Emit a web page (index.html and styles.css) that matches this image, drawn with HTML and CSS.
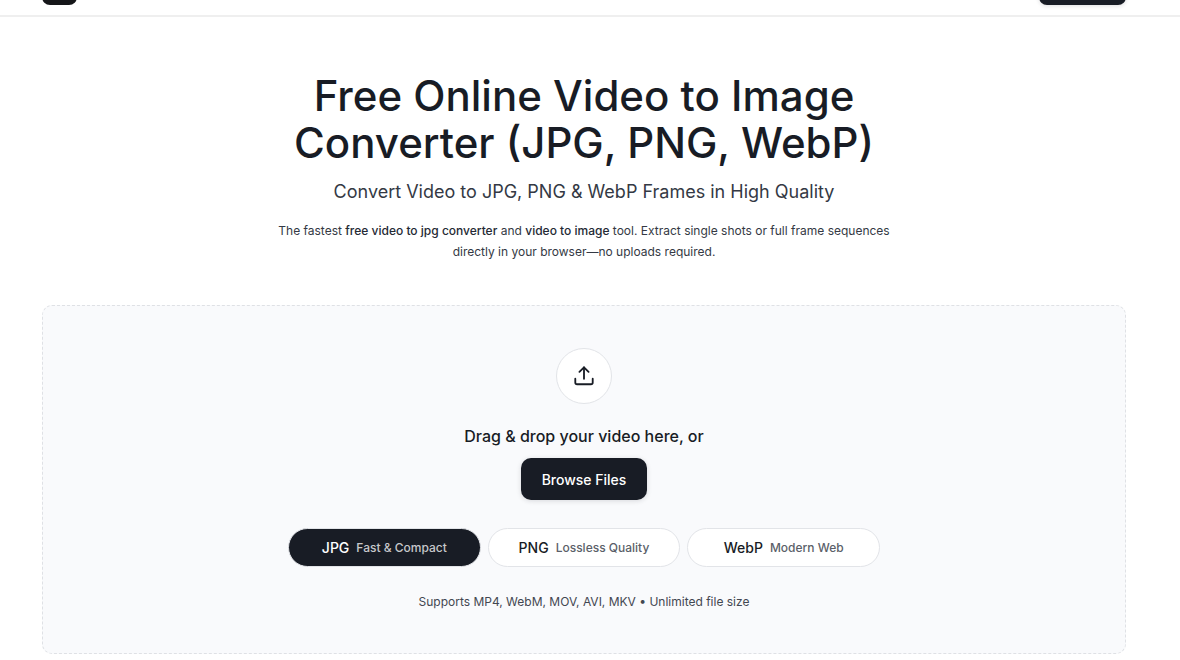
FILE: index.html
```html
<!DOCTYPE html>
<html lang="en">
<head>
  <meta charset="UTF-8" />
  <title>Free Online Video to Image Converter</title>
  <meta name="viewport" content="width=device-width, initial-scale=1.0" />
  <link rel="stylesheet" href="styles.css">
</head>
<body>
  <header class="site-header">
    <a href="#" class="brand" aria-label="Home"></a>
    <button type="button" class="header-btn" aria-label="Get started"></button>
  </header>

  <main class="page">
    <section class="hero">
      <h1>Free Online Video to Image Converter (JPG, PNG, WebP)</h1>
      <h2>Convert Video to JPG, PNG &amp; WebP Frames in High Quality</h2>
      <p>The fastest <strong>free video to jpg converter</strong> and <strong>video to image</strong> tool. Extract single shots or full frame sequences directly in your browser—no uploads required.</p>
    </section>

    <section class="dropzone">
      <div class="upload-icon">
        <svg width="22" height="22" viewBox="0 0 24 24" fill="none" stroke="currentColor" stroke-width="2" stroke-linecap="round" stroke-linejoin="round" aria-hidden="true">
          <path d="M21.5 15v4a2 2 0 0 1-2 2h-15a2 2 0 0 1-2-2v-4" />
          <path d="M17 7.500l-5-5-5 5" />
          <path d="M12 2.500v12.500" />
        </svg>
      </div>
      <p class="drop-text">Drag &amp; drop your video here, or</p>
      <button type="button" class="browse-btn">Browse Files</button>
      <div class="formats">
        <button type="button" class="format active">JPG <span>Fast &amp; Compact</span></button>
        <button type="button" class="format">PNG <span>Lossless Quality</span></button>
        <button type="button" class="format">WebP <span>Modern Web</span></button>
      </div>
      <p class="supports">Supports MP4, WebM, MOV, AVI, MKV • Unlimited file size</p>
    </section>
  </main>
</body>
</html>
```
FILE: styles.css
```css
* { box-sizing: border-box; }
body { margin: 0; font-family: Inter, "Liberation Sans", sans-serif; color: #181c25; background: #fff; overflow: hidden; }
button { font-family: inherit; cursor: pointer; }

/* Header, scrolled mostly out of view */
.site-header {
  display: flex; justify-content: space-between; align-items: flex-end;
  height: 64px; margin-top: -47px; padding: 0 54px 10px 42px;
  border-bottom: 2px solid #efefef;
}
.brand { width: 35px; height: 35px; border-radius: 8px; background: #151619; }
.header-btn {
  width: 87px; height: 32px; border: none; border-radius: 8px; background: #181c25;
  box-shadow: 0 1px 4px rgba(24, 28, 37, 0.15);
}

.page { padding: 55px 54px 0 42px; }

.hero { max-width: 640px; margin: 0 auto; text-align: center; }
.hero h1 { margin: 0; font-size: 42px; line-height: 47px; font-weight: 500; }
.hero h2 { margin: 14px 0 16px; font-size: 18px; line-height: 24px; font-weight: 400; color: #343944; }
.hero p { margin: 0; font-size: 12px; line-height: 21px; color: #343944; }
.hero strong { font-weight: 500; color: #242934; }

.dropzone {
  display: flex; flex-direction: column; align-items: center;
  margin-top: 43px; padding: 42px 40px 41px;
  border: 1px dashed #dfe1e5; border-radius: 10px; background: #f9fafc;
}
.upload-icon {
  display: flex; align-items: center; justify-content: center;
  width: 56px; height: 56px; border: 1px solid #e2e4e8; border-radius: 50%; background: #fff;
}
.drop-text { margin: 20px 0 10px; font-size: 16px; line-height: 24px; font-weight: 500; }
.browse-btn {
  height: 42px; padding: 0 21px; border: none; border-radius: 10px;
  background: #181c25; color: #fff; font-size: 14px; font-weight: 500;
  box-shadow: 0 1px 5px rgba(24, 28, 37, 0.15);
}
.formats { display: grid; grid-template-columns: repeat(3, 1fr); gap: 7px; width: 100%; max-width: 592px; margin: 28px 0 25px; }
.format {
  display: flex; align-items: center; justify-content: center; gap: 7px;
  height: 39px; padding: 0; border: 1px solid #e2e4e8; border-radius: 20px;
  background: #fff; color: #181c25; font-size: 14px; font-weight: 500;
}
.format span { font-size: 12px; color: #5b5f69; }
.format.active { background: #181c25; color: #fff; }
.format.active span { color: #c7c8cb; }
.supports { margin: 0; font-size: 12px; line-height: 20px; color: #434751; }
```
